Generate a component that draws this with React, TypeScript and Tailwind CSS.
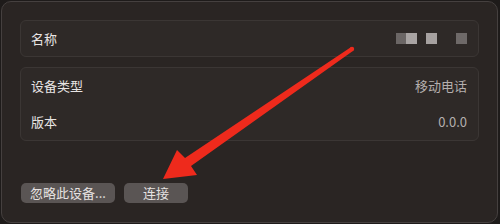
import React from "react";

const FONT = { fontFamily: '"Noto Sans CJK SC", "Noto Sans", sans-serif' };

function Row({ label, value, h = "h-[36px]" }: { label: string; value?: React.ReactNode; h?: string }) {
  return (
    <div className={`flex ${h} items-center justify-between pr-[11px] pl-[10px]`}>
      <span className="text-[13px] text-[#e8e4e3]">{label}</span>
      {value}
    </div>
  );
}

function BlurName() {
  return (
    <div className="flex items-center">
      <span className="h-[11px] w-[10px] bg-[#6b6665]" />
      <span className="h-[11px] w-[11px] bg-[#a9a4a3]" />
      <span className="ml-[9px] h-[11px] w-[11px] bg-[#a6a1a0]" />
      <span className="ml-[19px] h-[11px] w-[11px] bg-[#6e6968]" />
    </div>
  );
}

function Arrow() {
  return (
    <svg className="pointer-events-none absolute top-0 left-0" width="500" height="224" viewBox="0 0 500 224">
      <polygon
        fill="#ee2a1c"
        points="350.8,47.2 185,157.9 177,150 163,179 197,175 191,166.1 353.2,50.8"
      />
      <circle cx="352" cy="49" r="2.2" fill="#ee2a1c" />
    </svg>
  );
}

export default function App() {
  return (
    <div className="relative h-[224px] w-[500px] bg-[#1e1b1a] p-[1px]" style={FONT}>
      <div className="flex h-[222px] w-[497px] flex-col rounded-[10px] border border-[#45403f] bg-[#2a2523] px-[18px] pt-[18px]">
        <div className="rounded-[6px] border border-[#3b3634] bg-[#2e2927]">
          <Row label="名称" value={<BlurName />} h="h-[35px]" />
        </div>
        <div className="mt-[10px] rounded-[6px] border border-[#3b3634] bg-[#2e2927]">
          <Row label="设备类型" value={<span className="text-[13px] text-[#b4afae]">移动电话</span>} />
          <Row label="版本" value={<span className="text-[13px] text-[#b4afae]">0.0.0</span>} />
        </div>
        <div className="mt-[42px] flex gap-[9px] pl-[1px]">
          <button className="flex h-[20px] w-[94px] items-center justify-center rounded-[5px] bg-[#5a5554] text-[13px] text-[#e6e2e1]">
            忽略此设备...
          </button>
          <button className="flex h-[20px] w-[64px] items-center justify-center rounded-[5px] bg-[#5a5554] text-[13px] text-[#e6e2e1]">
            连接
          </button>
        </div>
      </div>
      <Arrow />
    </div>
  );
}
